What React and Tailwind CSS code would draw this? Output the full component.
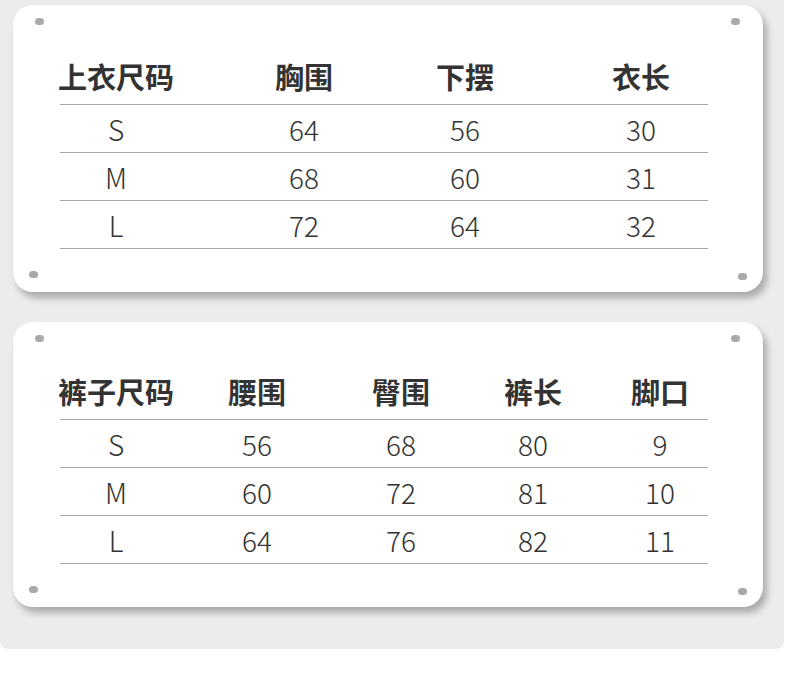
const font = { fontFamily: '"Noto Sans CJK SC", "Noto Sans", sans-serif' };

const tops = {
  grid: "grid-cols-[112px_264px_58px_294px]",
  head: ["上衣尺码", "胸围", "下摆", "衣长"],
  rows: [
    ["S", "64", "56", "30"],
    ["M", "68", "60", "31"],
    ["L", "72", "64", "32"],
  ],
};

const pants = {
  grid: "grid-cols-[112px_170px_118px_146px_108px]",
  head: ["裤子尺码", "腰围", "臀围", "裤长", "脚口"],
  rows: [
    ["S", "56", "68", "80", "9"],
    ["M", "60", "72", "81", "10"],
    ["L", "64", "76", "82", "11"],
  ],
};

function Screw({ className }) {
  return (
    <span
      className={`absolute w-[9px] h-[7px] rounded-full bg-[#a9a9a9] blur-[0.6px] ${className}`}
    />
  );
}

function SizeCard({ table, padTop }) {
  return (
    <div
      className={`relative w-[750px] bg-white rounded-[20px] shadow-[4px_6px_7px_rgba(0,0,0,0.28)] pl-[47px] pb-[43px] ${padTop}`}
    >
      {/* corner screws */}
      <Screw className="left-[22px] top-[13px]" />
      <Screw className="right-[23px] top-[13px]" />
      <Screw className="left-[16px] bottom-[14px]" />
      <Screw className="right-[16px] bottom-[12px]" />

      <div className="w-[648px]">
        {/* header */}
        <div
          className={`grid ${table.grid} h-[55px] leading-[52px] border-b border-[#a8a8a8] text-[29px] font-bold text-[#333]`}
        >
          {table.head.map((h) => (
            <div key={h} className="flex justify-center whitespace-nowrap">
              {h}
            </div>
          ))}
        </div>

        {/* rows */}
        {table.rows.map((r) => (
          <div
            key={r[0]}
            className={`grid ${table.grid} h-[48px] leading-[48px] border-b border-[#a8a8a8] text-[28px] font-light text-[#333]`}
          >
            {r.map((v, i) => (
              <div key={i} className="flex justify-center whitespace-nowrap">
                {v}
              </div>
            ))}
          </div>
        ))}
      </div>
    </div>
  );
}

export default function App() {
  return (
    <div className="w-[790px] h-[675px] bg-white" style={font}>
      <div className="w-[784px] h-[649px] bg-[#ececec] rounded-b-[8px] pt-[5px] pl-[13px] flex flex-col gap-[30px]">
        <SizeCard table={tops} padTop="pt-[45px]" />
        <SizeCard table={pants} padTop="pt-[43px]" />
      </div>
    </div>
  );
}
